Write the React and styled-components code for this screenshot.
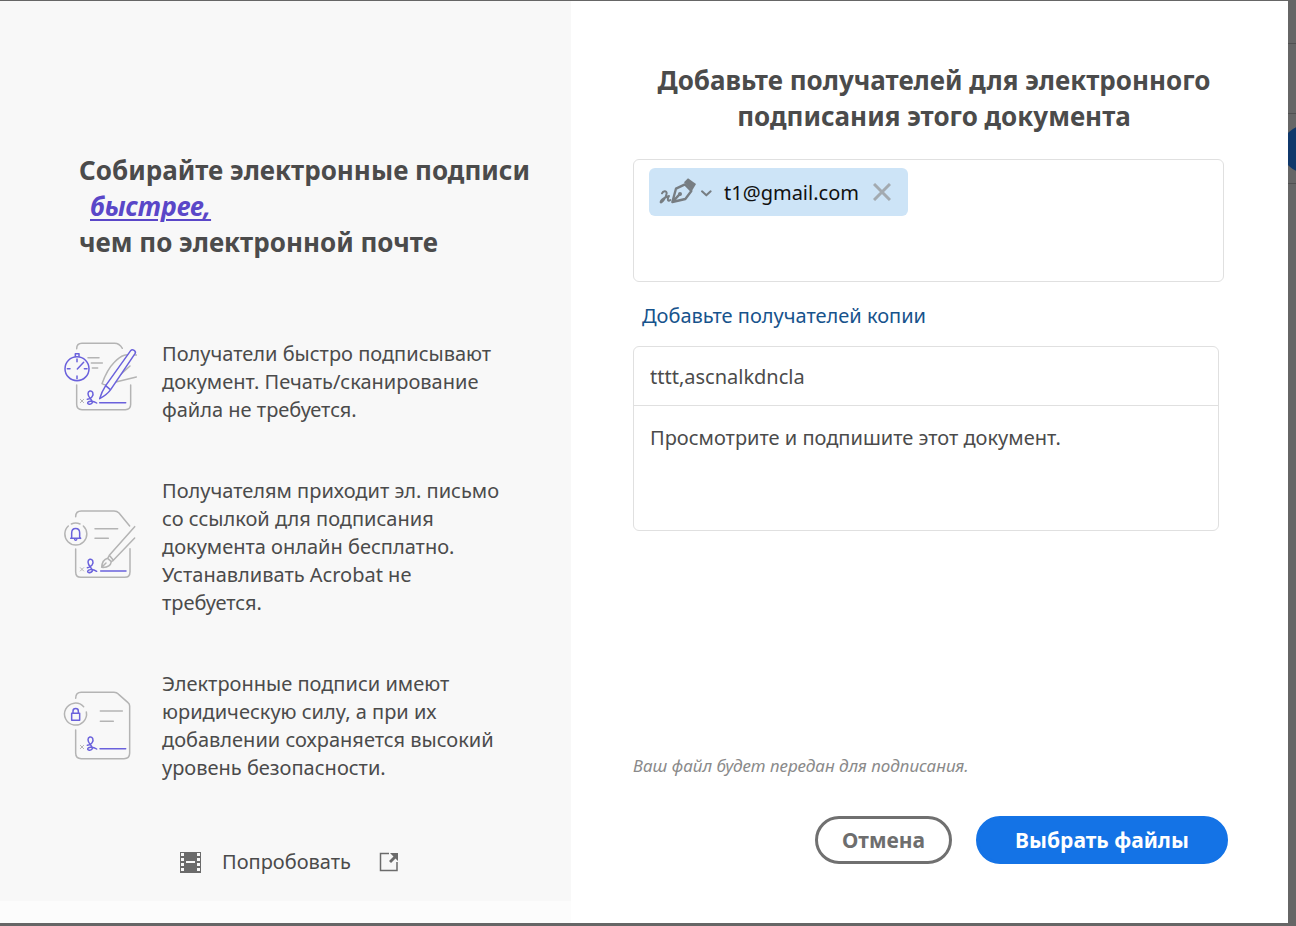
import React, { useState } from "react";
import styled, { createGlobalStyle } from "styled-components";

const GlobalStyle = createGlobalStyle`
  *, *::before, *::after { box-sizing: border-box; }
  body {
    margin: 0;
    background: #666;
    color: #4b4b4b;
    font-family: "Noto Sans", "Open Sans", sans-serif;
    font-size: 20px;
  }
  button, input, textarea { font: inherit; color: inherit; }
`;

const Page = styled.div`
  display: flex;
  min-height: 100vh;
  padding: 1px 0 3px;
`;

const Dialog = styled.main`
  flex: 1;
  display: grid;
  grid-template-columns: 571fr 717fr;
  background: #fff;
`;

const Backdrop = styled.div`
  width: 8px;
  overflow: hidden;
`;

const BackdropRow = styled.div`
  height: 70px;
  display: flex;
  align-items: center;
  border-bottom: 1px solid #505050;
  &:first-child { height: 43px; }
`;

const BackdropButton = styled.div`
  flex: none;
  width: 48px;
  height: 48px;
  margin-left: -6px;
  border-radius: 24px;
  background: #10386b;
`;

const Promo = styled.section`
  display: flex;
  flex-direction: column;
  padding: 151px 32px 0 60px;
  background: #f8f8f8;
  border-bottom: 22px solid #fcfcfc;
`;

const PromoTitle = styled.h2`
  margin: 0 0 80px;
  padding-left: 19px;
  font-size: 26px;
  line-height: 36px;
  font-weight: 700;
  white-space: nowrap;
`;

const Accent = styled.em`
  display: block;
  padding-left: 11px;
  color: #5a47c8;
  text-decoration: underline;
  text-decoration-thickness: 2px;
  text-underline-offset: 3px;
`;

const Benefits = styled.ul`
  display: flex;
  flex-direction: column;
  gap: 53px;
  margin: 0;
  padding: 0;
  list-style: none;
`;

const Benefit = styled.li`
  display: flex;
  align-items: center;
  gap: 22px;
  line-height: 28px;
  white-space: nowrap;
`;

const Sketch = styled.svg`
  flex: none;
  width: 80px;
  height: 84px;
  fill: none;
  stroke: #b4b4b4;
  stroke-width: 4.500;
  stroke-linecap: round;
  stroke-linejoin: round;
  .accent { stroke: #6a61dc; }
  .paper { fill: #f8f8f8; }
`;

const TryLink = styled.a`
  display: flex;
  align-items: center;
  align-self: flex-start;
  margin: 66px 0 0 120px;
  color: #4b4b4b;
  line-height: 28px;
  text-decoration: none;
  span { margin: 0 28px 0 21px; }
`;

const Form = styled.form`
  display: flex;
  flex-direction: column;
  align-items: stretch;
  padding: 61px 60px 59px 62px;
`;

const FormTitle = styled.h1`
  margin: 0 0 25px;
  padding-left: 7px;
  font-size: 26px;
  line-height: 36px;
  font-weight: 700;
  text-align: center;
  white-space: nowrap;
`;

const Recipients = styled.div`
  display: flex;
  align-items: flex-start;
  height: 123px;
  margin-right: 4px;
  padding: 8px 15px;
  border: 1px solid #e0e0e0;
  border-radius: 6px;
`;

const Chip = styled.div`
  display: flex;
  align-items: center;
  height: 48px;
  width: 259px;
  padding: 0 17px 0 10px;
  border-radius: 6px;
  background: #cde4f7;
  color: #111;
`;

const IconButton = styled.button`
  display: flex;
  align-items: center;
  padding: 0;
  border: 0;
  background: none;
  cursor: pointer;
`;

const Email = styled.span`
  flex: 1;
  margin-left: 9px;
`;

const CopyLink = styled.a`
  align-self: flex-start;
  margin: 20px 0 16px 9px;
  color: #17538c;
  line-height: 28px;
  text-decoration: none;
`;

const Message = styled.div`
  display: flex;
  flex-direction: column;
  margin-right: 9px;
  border: 1px solid #e0e0e0;
  border-radius: 6px;
`;

const Subject = styled.input`
  height: 59px;
  padding: 0 16px;
  border: 0;
  border-bottom: 1px solid #e0e0e0;
  border-radius: 6px 6px 0 0;
  background: none;
  outline: none;
`;

const Body = styled.textarea`
  height: 124px;
  padding: 18px 16px;
  border: 0;
  border-radius: 0 0 6px 6px;
  background: none;
  line-height: 28px;
  outline: none;
  resize: none;
`;

const Note = styled.p`
  margin: auto 0 36px;
  color: #8a8a8a;
  font-size: 17px;
  line-height: 28px;
  font-style: italic;
`;

const Actions = styled.div`
  display: flex;
  justify-content: flex-end;
  gap: 24px;
`;

const Button = styled.button`
  width: ${(p) => (p.$primary ? "252px" : "137px")};
  height: 48px;
  padding: 0;
  border: 3px solid ${(p) => (p.$primary ? "#1473e6" : "#707070")};
  border-radius: 24px;
  background: ${(p) => (p.$primary ? "#1473e6" : "#fff")};
  color: ${(p) => (p.$primary ? "#fff" : "#6e6e6e")};
  font-size: 21px;
  line-height: 28px;
  font-weight: 700;
  cursor: pointer;
`;

function Signature() {
  return (
    <>
      <path d="M91 208l10 10M101 208l-10 10" strokeWidth="3" />
      <path
        className="accent"
        d="M112 208C124 207 132 196 128 187C124 180 114 182 114 191C114 202 124 207 127 215C128 223 115 225 113 220C112 213 128 211 140 219"
      />
    </>
  );
}

function SignFast() {
  return (
    <Sketch viewBox="30 30 240 252" aria-hidden="true">
      <path d="M80 56c0-10 6-16 16-16h98c10 0 18 7 23 15M80 165v58c0 10 6 16 16 16h130c10 0 16-6 16-16v-58" />
      <path d="M114 83h33M124 99h33M127 114h16" />
      <circle className="accent" cx="81" cy="116" r="36" />
      <path className="accent" d="M76 79v-8h11v8M81 87v8M81 138v8M52 116h8M103 116h8M82 117l19-20" />
      <path d="M259 75c-28-5-46 0-66 22-20 20-30 45-37 64 8 5 18 5 26-1M182 160l77-19M240 108l-39 35" />
      <path className="accent paper" d="M149 206c4-14 9-25 18-39L242 62c5-7 18 1 13 9l-73 108c-9 13-20 20-33 27M167 167l14 12" />
      <Signature />
      <path className="accent" d="M149 218h78" />
    </Sketch>
  );
}

function SignOnline() {
  return (
    <Sketch viewBox="30 15 240 252" aria-hidden="true">
      <path d="M77 50c0-11 6-17 17-17h98q9 0 15 6l32 39M77 147v68c0 10 6 17 16 17h131c10 0 16-7 16-17v-69" />
      <path d="M135 86h68M135 115h40" />
      <path d="M100 78a33 33 0 1 1-45 0M64 72a33 33 0 0 1 26 0" />
      <path className="accent" d="M62 115h29M65 112V99c0-18 24-18 24 0v13l3 3M74 119q3 4 6 0" />
      <path d="M254 80l-76 86 12 15 64-67M178 166l-5 9 11 10 6-4M173 175c-12 3-17 13-18 27 15 1 27-5 29-17M156 201l12-12" />
      <g transform="translate(0 -5)">
        <Signature />
      </g>
      <path className="accent" d="M152 213h76" />
    </Sketch>
  );
}

function SignSecure() {
  return (
    <Sketch viewBox="30 12 240 252" aria-hidden="true">
      <path d="M77 55c0-12 6-18 17-18h98q8 0 14 6l28 25q5 4 5 10v141c0 11-6 17-17 17H94c-11 0-17-6-17-17v-69" />
      <path d="M151 93h66M151 124h39" />
      <path d="M101 80a33 33 0 1 0 8 16" />
      <path className="accent" d="M65 100h24v21H65zM69 99V93c0-10 16-10 16 0v6" />
      <g transform="translate(0 -12)">
        <Signature />
      </g>
      <path className="accent" d="M150 206h77" />
    </Sketch>
  );
}

function FilmIcon() {
  return (
    <svg width="21" height="21" viewBox="0 0 21 21" aria-hidden="true">
      <path fill="#6b6b6b" d="M0 0h21v21H0z" />
      <path
        fill="#f8f8f8"
        d="M1 1h3v3H1zM1 6h3v3H1zM1 11h3v3H1zM1 16h3v3H1zM17 1h3v3h-3zM17 6h3v3h-3zM17 11h3v3h-3zM17 16h3v3h-3zM6 9h9v2H6z"
      />
    </svg>
  );
}

function OpenIcon() {
  return (
    <svg width="20" height="20" viewBox="0 0 20 20" aria-hidden="true">
      <path fill="none" stroke="#6b6b6b" strokeWidth="1.500" d="M10 1.500H1.500v17H18V10" />
      <path fill="#6b6b6b" d="M11 1h8v8l-2.500-2.500-4.500 4.500-2-2 4.500-4.500z" />
    </svg>
  );
}

function PenIcon() {
  return (
    <svg width="56" height="32" viewBox="90 68 168 96" aria-hidden="true">
      <g fill="none" stroke="#777d82" strokeLinecap="round" strokeLinejoin="round">
        <path strokeWidth="6" d="M99 120c3-7 14-9 14 0 0 9-15 30-18 27-1-8 18-17 25-19-6 9-4 18 4 12" />
        <path strokeWidth="7" d="M130 146l11-40 27-13 19 20-18 24zM131 145l20-21" />
        <path strokeWidth="6" d="M219 114l13 12 13-12" />
      </g>
      <circle cx="153" cy="122" r="6" fill="#777d82" />
      <path fill="#777d82" d="M165 87l12-12 24 17-12 20z" />
    </svg>
  );
}

function CloseIcon() {
  return (
    <svg width="18" height="18" viewBox="0 0 18 18" aria-hidden="true">
      <path fill="none" stroke="#a3aab0" strokeWidth="3" d="M1 1l16 16M17 1L1 17" />
    </svg>
  );
}

export default function App() {
  const [subject, setSubject] = useState("tttt,ascnalkdncla");
  const [body, setBody] = useState("Просмотрите и подпишите этот документ.");

  return (
    <>
      <GlobalStyle />
      <Page>
        <Dialog>
          <Promo>
            <PromoTitle>
              Собирайте электронные подписи
              <Accent>быстрее,</Accent>
              чем по электронной почте
            </PromoTitle>
            <Benefits>
              <Benefit>
                <SignFast />
                <span>
                  Получатели быстро подписывают<br />
                  документ. Печать/сканирование<br />
                  файла не требуется.
                </span>
              </Benefit>
              <Benefit>
                <SignOnline />
                <span>
                  Получателям приходит эл. письмо<br />
                  со ссылкой для подписания<br />
                  документа онлайн бесплатно.<br />
                  Устанавливать Acrobat не<br />
                  требуется.
                </span>
              </Benefit>
              <Benefit>
                <SignSecure />
                <span>
                  Электронные подписи имеют<br />
                  юридическую силу, а при их<br />
                  добавлении сохраняется высокий<br />
                  уровень безопасности.
                </span>
              </Benefit>
            </Benefits>
            <TryLink href="#try">
              <FilmIcon />
              <span>Попробовать</span>
              <OpenIcon />
            </TryLink>
          </Promo>

          <Form onSubmit={(e) => e.preventDefault()}>
            <FormTitle>
              Добавьте получателей для электронного<br />
              подписания этого документа
            </FormTitle>
            <Recipients>
              <Chip>
                <IconButton type="button" aria-label="Роль получателя">
                  <PenIcon />
                </IconButton>
                <Email>t1@gmail.com</Email>
                <IconButton type="button" aria-label="Удалить получателя">
                  <CloseIcon />
                </IconButton>
              </Chip>
            </Recipients>
            <CopyLink href="#copy">Добавьте получателей копии</CopyLink>
            <Message>
              <Subject aria-label="Тема" value={subject} onChange={(e) => setSubject(e.target.value)} />
              <Body aria-label="Сообщение" value={body} onChange={(e) => setBody(e.target.value)} />
            </Message>
            <Note>Ваш файл будет передан для подписания.</Note>
            <Actions>
              <Button type="button">Отмена</Button>
              <Button type="submit" $primary>Выбрать файлы</Button>
            </Actions>
          </Form>
        </Dialog>
        <Backdrop aria-hidden="true">
          <BackdropRow />
          <BackdropRow />
          <BackdropRow>
            <BackdropButton />
          </BackdropRow>
        </Backdrop>
      </Page>
    </>
  );
}
